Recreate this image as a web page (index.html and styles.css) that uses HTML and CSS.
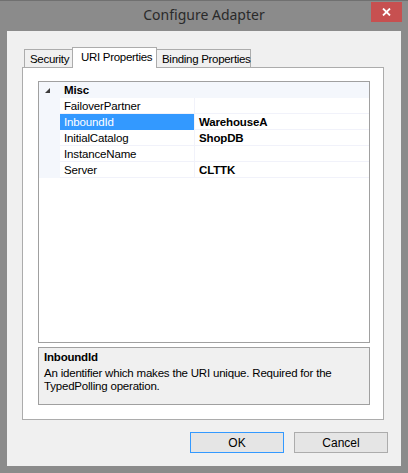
FILE: index.html
```html
<!DOCTYPE html>
<html>
<head>
<meta charset="utf-8">
<link rel="stylesheet" href="styles.css">
</head>
<body>
<div class="window">
  <div class="titlebar">
    <span></span>
    <div class="title">Configure Adapter</div>
    <button class="close" aria-label="Close">
      <svg width="9" height="8" viewBox="0 0 9 8"><path d="M1 0.5 L8 7.5 M8 0.5 L1 7.5" stroke="#fff" stroke-width="1.8" fill="none"/></svg>
    </button>
  </div>
  <div class="client">
    <div class="tabs">
      <div class="tab">Security</div>
      <div class="tab active">URI Properties</div>
      <div class="tab">Binding Properties</div>
    </div>
    <div class="panel">
      <div class="grid">
        <div class="row category">
          <div class="margin"><svg width="5" height="5" viewBox="0 0 5 5"><polygon points="5,0 5,5 0,5" fill="#3c3c3c"/></svg></div>
          <div class="cat-name">Misc</div>
        </div>
        <div class="row"><div class="margin"></div><div class="name">FailoverPartner</div><div class="value"></div></div>
        <div class="row"><div class="margin"></div><div class="name selected">InboundId</div><div class="value">WarehouseA</div></div>
        <div class="row"><div class="margin"></div><div class="name">InitialCatalog</div><div class="value">ShopDB</div></div>
        <div class="row"><div class="margin"></div><div class="name">InstanceName</div><div class="value"></div></div>
        <div class="row"><div class="margin"></div><div class="name">Server</div><div class="value">CLTTK</div></div>
      </div>
      <div class="desc">
        <div class="desc-title">InboundId</div>
        <div class="desc-text">An identifier which makes the URI unique. Required for the TypedPolling operation.</div>
      </div>
    </div>
    <div class="buttons">
      <button class="btn default">OK</button>
      <button class="btn">Cancel</button>
    </div>
  </div>
</div>
</body>
</html>
```
FILE: styles.css
```css
html, body {
  margin: 0;
  padding: 0;
  background: #8b8b8b;
}
.window {
  width: 408px;
  height: 473px;
  box-sizing: border-box;
  background: #8b8b8b;
  border-top: 1px solid #707070;
  display: flex;
  flex-direction: column;
  font-family: "Liberation Sans", Arial, sans-serif;
}
.titlebar {
  height: 30px;
  display: grid;
  grid-template-columns: 1fr auto 1fr;
  align-items: start;
}
.title {
  font-family: "Noto Sans", sans-serif;
  font-size: 14px;
  color: #2a2a2a;
  line-height: 30px;
  margin-top: -1px;
}
.close {
  justify-self: end;
  margin: 1px 6px 0 0;
  width: 31px;
  height: 20px;
  border: none;
  padding: 0;
  background: #c75050;
  display: flex;
  align-items: center;
  justify-content: center;
}
.client {
  margin: 0 7px 7px 7px;
  height: 435px;
  background: #f0f0f0;
  box-sizing: border-box;
  padding: 16px 17px 0 15px;
  display: flex;
  flex-direction: column;
}
.tabs {
  display: flex;
  align-items: flex-end;
  height: 20px;
  padding-left: 2px;
  position: relative;
  z-index: 1;
}
.tab {
  height: 18px;
  box-sizing: border-box;
  border: 1px solid #acacac;
  border-bottom: none;
  background: #f0f0f0;
  font-size: 11.5px;
  letter-spacing: -0.3px;
  color: #000;
  line-height: 18px;
  padding: 0 5px;
  margin-right: -1px;
  white-space: nowrap;
}
.tab:nth-child(1) { width: 49px; }
.tab:nth-child(2) { width: 85px; }
.tab:nth-child(3) { width: 95px; }
.tab.active {
  height: 21px;
  background: #fff;
  margin-bottom: -1px;
  line-height: 18px;
  padding-bottom: 3px;
  padding-left: 8px;
}
.panel {
  height: 353px;
  box-sizing: border-box;
  border: 1px solid #acacac;
  background: #fff;
  padding: 13px 13px 0 15px;
  display: flex;
  flex-direction: column;
  gap: 4px;
}
.grid {
  height: 262px;
  box-sizing: border-box;
  border: 1px solid #a0a0a0;
  background: #fff;
  font-size: 11.5px;
  letter-spacing: -0.15px;
}
.row {
  display: grid;
  grid-template-columns: 21px 135px 1fr;
  height: 16px;
  box-sizing: border-box;
  border-bottom: 1px solid #f1f2fa;
  line-height: 16px;
}
.row.category {
  background: #f4f7fc;
  border-bottom: none;
}
.margin {
  background: #f4f7fc;
  display: flex;
  align-items: center;
  justify-content: center;
}
.margin svg { margin-left: -4px; margin-top: 1px; }
.cat-name {
  grid-column: 2 / 4;
  font-weight: bold;
  padding-left: 4px;
}
.name {
  padding-left: 4px;
  border-right: 1px solid #f1f2fa;
  color: #000;
}
.name.selected {
  background: #3399ff;
  color: #fff;
}
.value {
  padding-left: 4px;
  font-weight: bold;
}
.desc {
  height: 58px;
  box-sizing: border-box;
  border: 1px solid #a0a0a0;
  background: #f0f0f0;
  padding: 3px 5px;
  font-size: 11.5px;
  letter-spacing: -0.2px;
  line-height: 13px;
}
.desc-title {
  font-weight: bold;
  margin-bottom: 3px;
}
.buttons {
  display: flex;
  justify-content: flex-end;
  gap: 10px;
  margin-top: 12px;
  margin-right: -4px;
}
.btn {
  width: 94px;
  height: 21px;
  box-sizing: border-box;
  border: 1px solid #acacac;
  background: #e5e5e5;
  font-family: "Liberation Sans", Arial, sans-serif;
  font-size: 12px;
  color: #000;
  padding: 0;
}
.btn.default {
  border-color: #3399ff;
}
```
